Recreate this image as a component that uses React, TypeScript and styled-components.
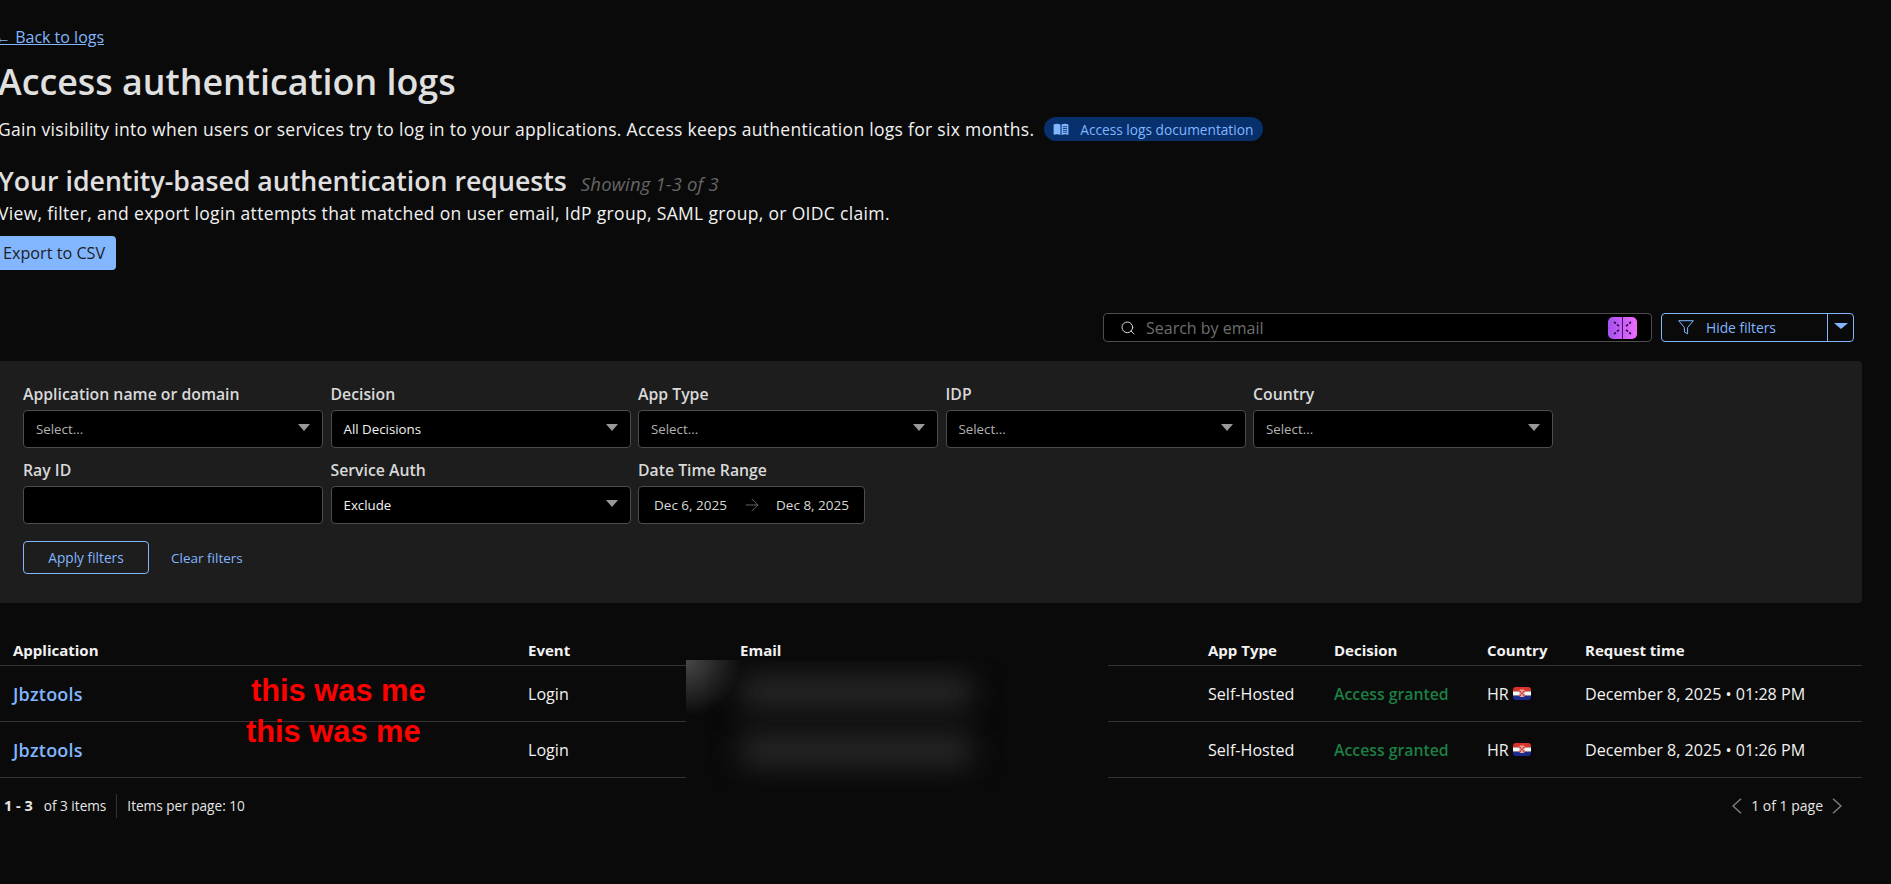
import React from "react";
import styled, { createGlobalStyle } from "styled-components";
import { Search, ArrowRight } from "lucide-react";

const Global = createGlobalStyle`
  html, body { margin: 0; padding: 0; background: #0a0a0a; height: 884px; overflow: hidden; }
  body { font-family: "Open Sans", "Liberation Sans", sans-serif; color: #f2f2f2; }
  * { box-sizing: border-box; }
`;

const Page = styled.div`
  position: relative;
  width: 1864px;
  height: 884px;
  margin-left: -2px;
  padding-top: 27px;
`;
const BackLink = styled.a`
  display: block;
  width: fit-content;
  margin-left: -3px;
  font-size: 16px;
  line-height: 20px;
  color: #82b6ff;
  text-decoration: underline;
`;
const Title = styled.h1`
  margin: 14px 0 0;
  font-size: 35.8px;
  line-height: 40px;
  font-weight: 600;
  color: #e0e0e0;
`;
const IntroRow = styled.div`
  display: flex;
  align-items: center;
  margin-top: 16px;
  height: 24px;
  gap: 10px;
`;
const Body = styled.p`
  margin: 0;
  font-size: 17.5px;
  line-height: 24px;
  letter-spacing: 0.29px;
  color: #f2f2f2;
  white-space: nowrap;
`;
const DocChip = styled.a`
  display: inline-flex;
  align-items: center;
  gap: 11px;
  height: 24px;
  padding: 0 10px 0 9px;
  border-radius: 12px;
  background: #07306c;
  color: #82b6ff;
  font-size: 13.7px;
  white-space: nowrap;
`;
const SubRow = styled.div`
  display: flex;
  align-items: baseline;
  gap: 14px;
  margin-top: 24px;
`;
const Subtitle = styled.h2`
  margin: 0;
  font-size: 26.7px;
  line-height: 32px;
  font-weight: 600;
  color: #e0e0e0;
`;
const Showing = styled.span`
  font-size: 18.5px;
  font-style: italic;
  letter-spacing: 0.15px;
  color: #666;
`;
const SubBody = styled(Body)`
  margin-top: 4px;
  letter-spacing: 0.33px;
`;
const ExportButton = styled.button`
  display: block;
  height: 34px;
  width: 120px;
  margin: 11px 0 0 -2px;
  padding: 0 0 0 7px;
  border: 0;
  border-radius: 4px;
  background: #82b6ff;
  color: #1d1d1d;
  font: inherit;
  font-size: 16.2px;
  text-align: left;
  white-space: nowrap;
`;
const Toolbar = styled.div`
  display: flex;
  justify-content: flex-end;
  gap: 9px;
  margin-top: 43px;
  padding-right: 8px;
`;
const SearchBox = styled.div`
  display: flex;
  align-items: center;
  width: 549px;
  height: 29px;
  padding: 0 14px 0 16px;
  background: #000;
  border: 1px solid #4d4d4d;
  border-radius: 4px;
  color: #d9d9d9;
`;
const SearchText = styled.span`
  flex: 1;
  margin-left: 10px;
  font-size: 16px;
  color: #6e6e6e;
`;
const SplitButton = styled.div`
  display: flex;
  width: 193px;
  height: 29px;
  border: 1px solid #82b6ff;
  border-radius: 4px;
  color: #82b6ff;
  font-size: 13.8px;
`;
const SplitMain = styled.div`
  display: flex;
  align-items: center;
  gap: 12px;
  flex: 1;
  padding-left: 16px;
  border-right: 1px solid #82b6ff;
`;
const SplitCaret = styled.div`
  display: flex;
  align-items: center;
  justify-content: center;
  width: 25px;
`;
const Panel = styled.section`
  margin-top: 19px;
  height: 242px;
  padding: 23px 25px 0;
  background: #1d1d1d;
  border-radius: 4px;
`;
const FilterGrid = styled.div`
  display: grid;
  grid-template-columns: repeat(5, 300px);
  column-gap: 7.5px;
  row-gap: 12px;
`;
const Field = styled.div`
  display: flex;
  flex-direction: column;
  gap: 5px;
`;
const Label = styled.label`
  font-size: 15.8px;
  line-height: 20px;
  font-weight: 600;
  color: #d9d9d9;
  height: 21px;
  white-space: nowrap;
`;
const Control = styled.div<{ $width?: number; $muted?: boolean }>`
  display: flex;
  align-items: center;
  justify-content: space-between;
  width: ${(p) => (p.$width ? `${p.$width}px` : "100%")};
  height: 38px;
  padding: 0 12px;
  background: #000;
  border: 1px solid #4d4d4d;
  border-radius: 4px;
  font-size: 13.3px;
  color: ${(p) => (p.$muted ? "#b3b3b3" : "#f2f2f2")};
`;
const Caret = styled.span<{ $color?: string; $half?: number; $tall?: number }>`
  display: block;
  width: 0;
  height: 0;
  margin-top: -3px;
  border-left: ${(p) => p.$half ?? 6}px solid transparent;
  border-right: ${(p) => p.$half ?? 6}px solid transparent;
  border-top: ${(p) => p.$tall ?? 7.5}px solid ${(p) => p.$color ?? "#999"};
`;
const DateControl = styled(Control)`
  padding: 0 15px;
  font-size: 13.5px;
  color: #d9d9d9;
`;
const Actions = styled.div`
  display: flex;
  align-items: center;
  gap: 22px;
  margin-top: 17px;
`;
const ApplyButton = styled.button`
  width: 126px;
  height: 33px;
  border: 1px solid #82b6ff;
  border-radius: 4px;
  background: transparent;
  color: #82b6ff;
  font: inherit;
  font-size: 13.7px;
`;
const ClearLink = styled.a`
  color: #82b6ff;
  font-size: 13.5px;
`;
const Row = styled.div<{ $head?: boolean }>`
  display: grid;
  grid-template-columns: 530px 212px 468px 126px 153px 98px 1fr;
  align-items: center;
  height: ${(p) => (p.$head ? "63px" : "56px")};
  padding-top: ${(p) => (p.$head ? "31px" : "0")};
  border-bottom: 1px solid #333;
  font-size: ${(p) => (p.$head ? "15px" : "16.1px")};
  font-weight: ${(p) => (p.$head ? 700 : 400)};
`;
const Cell = styled.div<{ $first?: boolean }>`
  padding-left: ${(p) => (p.$first ? "15px" : "0")};
  white-space: nowrap;
`;
const AppLink = styled.a`
  color: #82b6ff;
  font-weight: 600;
  font-size: 18px;
  letter-spacing: 0.2px;
`;
const Granted = styled.span`
  color: #1d7f44;
  font-weight: 600;
  font-size: 15.8px;
`;
const CountryCell = styled.div`
  display: flex;
  align-items: center;
  gap: 4px;
`;
const Footer = styled.div`
  display: flex;
  align-items: center;
  justify-content: space-between;
  height: 55px;
  padding: 0 20px 0 6px;
  font-size: 13.6px;
  color: #e6e6e6;
`;
const FootLeft = styled.div`
  display: flex;
  align-items: center;
`;
const Strong = styled.strong`
  margin-right: 11px;
  font-size: 14.5px;
`;
const FootDivider = styled.span`
  width: 1px;
  height: 24px;
  margin: 0 10px;
  background: #333;
`;
const FootRight = styled.div`
  display: flex;
  align-items: center;
  gap: 9px;
  font-size: 14px;
  color: #e6e6e6;
`;
const Redaction = styled.div`
  position: absolute;
  left: 688px;
  top: 660px;
  width: 422px;
  height: 125px;
  background: #0a0a0a;
  overflow: hidden;
`;
const CornerGlow = styled.div`
  position: absolute;
  left: 0;
  top: 0;
  width: 60px;
  height: 60px;
  background: radial-gradient(circle 56px at 0 0, #484848 0%, #2a2a2a 50%, rgba(10, 10, 10, 0) 100%);
`;
const SmearBar = styled.div<{ $top: number }>`
  position: absolute;
  left: 55px;
  top: ${(p) => p.$top}px;
  width: 230px;
  height: 34px;
  background: #262626;
  filter: blur(14px);
`;
const Note = styled.span<{ $left: number; $top: number }>`
  position: absolute;
  left: ${(p) => p.$left}px;
  top: ${(p) => p.$top}px;
  font-family: "Liberation Sans", Arial, sans-serif;
  font-weight: 700;
  font-size: 30.8px;
  line-height: 32px;
  color: #ff0000;
  white-space: nowrap;
`;

const BookIcon = () => (
  <svg width="16" height="12" viewBox="0 0 16 13" aria-hidden>
    <path d="M0 1.5C2.5.5 5 .5 7.4 1.7V13C5 11.8 2.5 11.8 0 12.8z" fill="#82b6ff" />
    <path d="M8.6 1.7C11 .5 13.5.5 16 1.5v11.3c-2.5-1-5-1-7.4.2z" fill="#82b6ff" />
    <path d="M10 4h4.6M10 6h4.6M10 8h4.6M10 10h4.6" stroke="#07306c" strokeWidth="0.9" />
  </svg>
);
const AiIcon = () => (
  <svg width="29" height="22" viewBox="0 0 29 22" aria-hidden>
    <defs>
      <linearGradient id="aiGrad" x1="0" x2="1" y1="0" y2="0">
        <stop offset="0" stopColor="#a550f0" />
        <stop offset="1" stopColor="#f06cff" />
      </linearGradient>
    </defs>
    <rect width="29" height="22" rx="5" fill="url(#aiGrad)" />
    <path d="M14.5 0v22" stroke="#3a1a5c" strokeWidth="1" />
    <path d="M6 5l6 5M23 5l-6 5M6 17l6-5M23 17l-6-5" stroke="#2b1447" strokeWidth="1.8" strokeDasharray="2.4 1.6" />
  </svg>
);
const FunnelIcon = () => (
  <svg width="16" height="15" viewBox="0 0 16 15" fill="none" aria-hidden>
    <path d="M.7.7h14.6L9.6 7.5v6.3L6.4 12V7.5z" stroke="#82b6ff" strokeWidth="1" strokeLinejoin="round" />
  </svg>
);
const PagerChevron = ({ flip }: { flip?: boolean }) => (
  <svg width="10" height="16" viewBox="0 0 10 16" fill="none" aria-hidden>
    <path d={flip ? "M1 .7 9 8l-8 7.3" : "M9 .7 1 8l8 7.3"} stroke="#808080" strokeWidth="1.4" />
  </svg>
);
const FlagHR = ({ id }: { id: string }) => (
  <svg width="18" height="13" viewBox="0 0 18 13" aria-hidden>
    <clipPath id={id}><rect width="18" height="13" rx="3" /></clipPath>
    <g clipPath={`url(#${id})`}>
      <rect width="18" height="4.4" fill="#d8342c" />
      <rect y="4.4" width="18" height="4.3" fill="#f5f5f5" />
      <rect y="8.7" width="18" height="4.3" fill="#1b2a8c" />
      <rect x="6.5" y="2.5" width="5" height="7.5" rx="1.2" fill="#eba9a3" />
      <path d="M6.5 4h1.6v1.6H6.5zM8.1 5.6h1.7v1.6H8.1zM9.9 4h1.6v1.6H9.9zM6.5 7.2h1.6v1.6H6.5zM9.9 7.2h1.6v1.6H9.9z" fill="#c8312a" />
    </g>
  </svg>
);

const filters = [
  { label: "Application name or domain", value: "Select...", muted: true },
  { label: "Decision", value: "All Decisions" },
  { label: "App Type", value: "Select...", muted: true },
  { label: "IDP", value: "Select...", muted: true },
  { label: "Country", value: "Select...", muted: true },
];
const rows = ["December 8, 2025 • 01:28 PM", "December 8, 2025 • 01:26 PM"];

export default function App() {
  return (
    <Page>
      <Global />
      <BackLink>← Back to logs</BackLink>
      <Title>Access authentication logs</Title>
      <IntroRow>
        <Body>Gain visibility into when users or services try to log in to your applications. Access keeps authentication logs for six months.</Body>
        <DocChip><BookIcon />Access logs documentation</DocChip>
      </IntroRow>
      <SubRow>
        <Subtitle>Your identity-based authentication requests</Subtitle>
        <Showing>Showing 1-3 of 3</Showing>
      </SubRow>
      <SubBody>View, filter, and export login attempts that matched on user email, IdP group, SAML group, or OIDC claim.</SubBody>
      <ExportButton>Export to CSV</ExportButton>
      <Toolbar>
        <SearchBox>
          <Search size={16} strokeWidth={1.5} />
          <SearchText>Search by email</SearchText>
          <AiIcon />
        </SearchBox>
        <SplitButton>
          <SplitMain><FunnelIcon />Hide filters</SplitMain>
          <SplitCaret><Caret $color="#82b6ff" $half={7.5} $tall={6} /></SplitCaret>
        </SplitButton>
      </Toolbar>
      <Panel>
        <FilterGrid>
          {filters.map((f) => (
            <Field key={f.label}>
              <Label>{f.label}</Label>
              <Control $muted={f.muted}>{f.value}<Caret /></Control>
            </Field>
          ))}
          <Field>
            <Label>Ray ID</Label>
            <Control />
          </Field>
          <Field>
            <Label>Service Auth</Label>
            <Control>Exclude<Caret /></Control>
          </Field>
          <Field>
            <Label>Date Time Range</Label>
            <DateControl $width={227}>
              Dec 6, 2025
              <ArrowRight size={20} strokeWidth={1} color="#777" />
              Dec 8, 2025
            </DateControl>
          </Field>
        </FilterGrid>
        <Actions>
          <ApplyButton>Apply filters</ApplyButton>
          <ClearLink>Clear filters</ClearLink>
        </Actions>
      </Panel>
      <Row $head>
        <Cell $first>Application</Cell>
        <Cell>Event</Cell>
        <Cell>Email</Cell>
        <Cell>App Type</Cell>
        <Cell>Decision</Cell>
        <Cell>Country</Cell>
        <Cell>Request time</Cell>
      </Row>
      {rows.map((time, i) => (
        <Row key={time}>
          <Cell $first><AppLink>Jbztools</AppLink></Cell>
          <Cell>Login</Cell>
          <Cell />
          <Cell>Self-Hosted</Cell>
          <Cell><Granted>Access granted</Granted></Cell>
          <CountryCell>HR <FlagHR id={`flag${i}`} /></CountryCell>
          <Cell>{time}</Cell>
        </Row>
      ))}
      <Footer>
        <FootLeft>
          <Strong>1 - 3</Strong>of 3 items
          <FootDivider />
          Items per page: 10
        </FootLeft>
        <FootRight>
          <PagerChevron />
          1 of 1 page
          <PagerChevron flip />
        </FootRight>
      </Footer>
      <Redaction>
        <CornerGlow />
        <SmearBar $top={15} />
        <SmearBar $top={73} />
      </Redaction>
      <Note $left={253} $top={675}>this was me</Note>
      <Note $left={248} $top={716}>this was me</Note>
    </Page>
  );
}
